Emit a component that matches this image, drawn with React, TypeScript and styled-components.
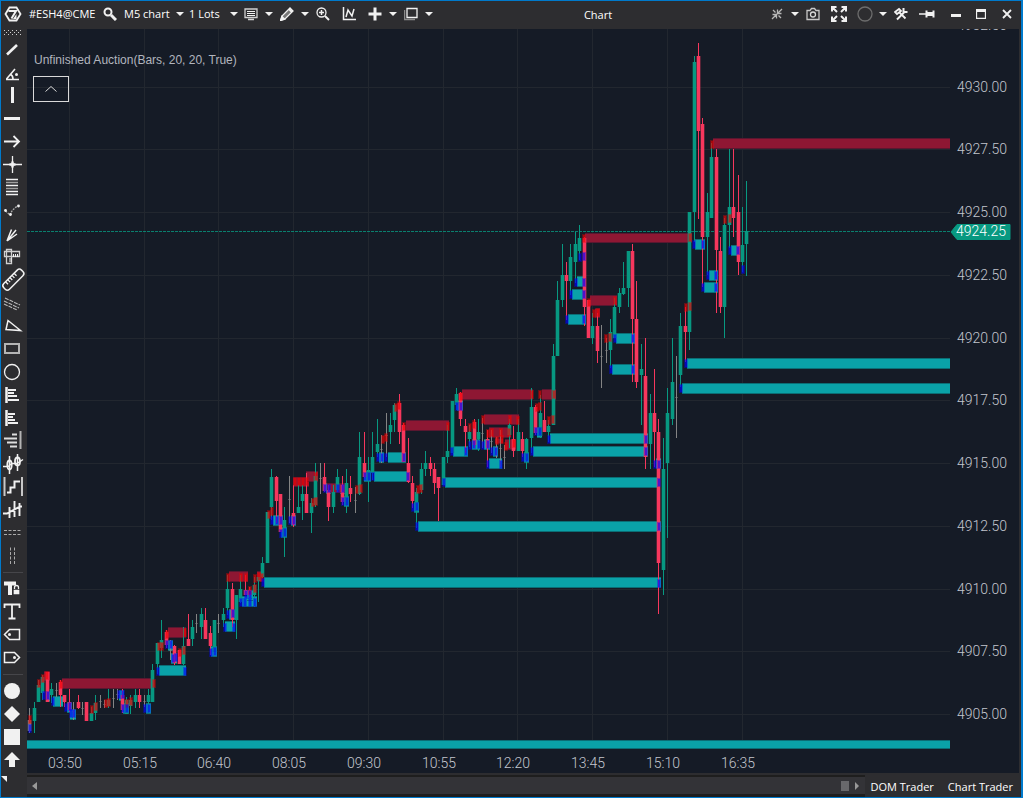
import React from "react";
import styled, { createGlobalStyle } from "styled-components";

const GlobalStyle = createGlobalStyle`
  * { box-sizing: border-box; }
  body { margin: 0; background: #2d2d30; }
  button, select { font: inherit; color: inherit; }
`;

const ui = `"Segoe UI", "Open Sans", "Noto Sans", sans-serif`;

const Window = styled.div`
  display: flex;
  flex-direction: column;
  min-height: 100vh;
  border: 1px solid #007acc;
  border-right-width: 2px;
  background: #2d2d30;
  color: #ffffff;
  font: 11px/16px ${ui};
`;

const TitleBar = styled.header`
  display: flex;
  align-items: center;
  height: 28px;
  padding-bottom: 2px;
`;

const Slot = styled.button<{ $w?: number }>`
  display: flex;
  flex: none;
  align-items: center;
  justify-content: center;
  width: ${(p) => p.$w ?? 20}px;
  height: 24px;
  padding: 0;
  border: 0;
  background: none;
`;

const Instrument = styled.span`
  width: 73px;
  padding-left: 4px;
  white-space: nowrap;
`;

const Picker = styled.label<{ $w: number }>`
  display: flex;
  flex: none;
  align-items: center;
  width: ${(p) => p.$w}px;
  select {
    flex: 1;
    min-width: 0;
    padding: 0 0 0 2px;
    border: 0;
    background: none;
    appearance: none;
    text-overflow: clip;
  }
  svg { margin-right: 3px; }
`;

const Title = styled.h1`
  flex: 1;
  margin: 0;
  padding: 2px 8px 0 0;
  font-size: 11px;
  font-weight: 400;
  text-align: center;
`;

const Body = styled.div`
  display: flex;
  flex: 1;
`;

const Tools = styled.nav`
  display: flex;
  flex: none;
  flex-direction: column;
  width: 26px;
`;

const Grip = styled.div`
  height: 9px;
  padding-left: 3px;
  line-height: 0;
`;

const Tool = styled.button`
  width: 22px;
  height: 23px;
  padding: 0;
  border: 0;
  background: none;
  svg { display: block; }
`;

const Separator = styled.hr`
  width: 20px;
  height: 1px;
  margin: 5px 0 4px 2px;
  border: 0;
  background: #46464a;
`;

const Main = styled.main`
  display: flex;
  flex: 1;
  flex-direction: column;
  min-width: 0;
`;

const ChartArea = styled.section`
  position: relative;
  display: flex;
  flex: 1;
  min-height: 744px;
  margin-right: 2px;
  background: #151b26;
`;

const Plot = styled.svg`
  flex: 1;
  min-width: 0;
  height: 744px;
`;

const PriceScale = styled.svg`
  flex: none;
  width: 69px;
  height: 744px;
`;

const Study = styled.div`
  position: absolute;
  top: 23px;
  left: 6px;
  color: #b2b5be;
  font: 12px/16px "Liberation Sans", Arial, sans-serif;
`;

const StudyName = styled.div`
  padding-left: 1px;
`;

const Collapse = styled.button`
  display: flex;
  align-items: center;
  justify-content: center;
  width: 36px;
  height: 26px;
  margin-top: 8px;
  padding: 0;
  border: 1px solid #d9d9d9;
  background: none;
`;

const Footer = styled.footer`
  display: flex;
  height: 24px;
`;

const ScrollBar = styled.div`
  display: flex;
  flex: 1;
  align-items: center;
  justify-content: space-between;
  margin-top: 2px;
  border: solid #1e1e1e;
  border-width: 2px 0 3px;
  background: #333337;
`;

const ScrollEnd = styled.div`
  display: flex;
  align-items: center;
`;

const Thumb = styled.div`
  width: 8px;
  height: 10px;
  margin-right: 2px;
  background: #68686b;
`;

const PanelButton = styled.button`
  margin: 0;
  padding: 4px 8px 0 6px;
  border: 0;
  background: none;
  line-height: 16px;
`;

/* ---------- chart data ---------- */

type Kind = "g" | "r" | "n";
// [kind, high, low, bodyTop, bodyBottom], one for each five minute bar
const bars: [Kind, number, number, number, number][] = [
  ["n", 708, 733, 720, 731], ["g", 702, 733, 708, 721], ["g", 680, 702, 685, 702], ["g", 675, 700, 677, 693],
  ["r", 672, 702, 672, 702], ["g", 683, 703, 689, 695], ["n", 683, 697, 0, 0], ["r", 680, 707, 682, 695],
  ["r", 695, 707, 695, 702], ["r", 689, 712, 702, 710], ["n", 702, 720, 0, 0], ["r", 695, 709, 702, 708],
  ["n", 702, 715, 0, 0], ["r", 702, 721, 702, 721], ["g", 707, 721, 713, 721], ["g", 695, 720, 703, 713],
  ["n", 695, 708, 0, 0], ["n", 700, 708, 0, 0], ["g", 689, 708, 700, 706], ["n", 689, 708, 0, 0],
  ["n", 689, 700, 0, 0], ["r", 689, 713, 695, 710], ["g", 697, 714, 700, 714], ["g", 695, 714, 700, 706],
  ["g", 689, 708, 695, 702], ["r", 689, 708, 695, 702], ["n", 695, 707, 0, 0], ["g", 689, 713, 695, 702],
  ["g", 664, 702, 670, 702], ["g", 643, 674, 643, 664], ["g", 620, 658, 640, 648], ["r", 630, 648, 632, 645],
  ["n", 640, 660, 0, 0], ["r", 645, 665, 646, 663], ["r", 650, 664, 650, 664], ["g", 627, 665, 646, 664],
  ["r", 614, 646, 639, 646], ["g", 620, 646, 627, 639], ["n", 614, 633, 0, 0], ["g", 608, 639, 614, 627],
  ["r", 608, 639, 620, 639], ["r", 626, 655, 633, 646], ["g", 620, 652, 620, 652], ["n", 614, 633, 0, 0],
  ["g", 608, 627, 614, 620], ["g", 575, 615, 589, 608], ["r", 583, 627, 589, 620], ["g", 595, 639, 595, 620],
  ["g", 575, 603, 589, 602], ["r", 575, 595, 590, 595], ["r", 587, 597, 590, 595], ["g", 577, 607, 585, 595],
  ["g", 577, 602, 577, 581], ["g", 557, 578, 563, 577], ["g", 512, 563, 512, 563], ["g", 469, 520, 477, 507],
  ["r", 476, 523, 477, 501], ["r", 494, 532, 494, 532], ["g", 507, 557, 520, 537], ["n", 476, 523, 0, 0],
  ["r", 485, 527, 513, 525], ["g", 485, 513, 507, 513], ["g", 485, 520, 494, 501], ["r", 473, 513, 494, 513],
  ["g", 498, 533, 503, 513], ["g", 463, 507, 476, 505], ["n", 463, 494, 0, 0], ["r", 463, 492, 477, 491],
  ["r", 485, 521, 490, 507], ["g", 485, 513, 492, 507], ["g", 469, 492, 477, 490], ["r", 476, 505, 485, 502],
  ["g", 469, 513, 483, 505], ["r", 476, 502, 488, 494], ["n", 487, 513, 0, 0], ["g", 432, 495, 457, 494],
  ["r", 432, 478, 463, 477], ["g", 457, 502, 470, 480], ["g", 432, 480, 457, 473], ["g", 419, 457, 444, 452],
  ["n", 435, 463, 0, 0], ["n", 413, 457, 0, 0], ["g", 413, 444, 425, 432], ["g", 403, 432, 405, 420],
  ["r", 394, 444, 403, 432], ["r", 423, 462, 425, 462], ["r", 438, 483, 463, 482], ["r", 476, 508, 483, 501],
  ["g", 488, 528, 492, 512], ["g", 463, 494, 469, 490], ["g", 451, 476, 463, 469], ["r", 457, 476, 463, 469],
  ["r", 463, 494, 469, 483], ["r", 477, 521, 477, 488], ["g", 457, 485, 457, 485], ["g", 425, 463, 451, 457],
  ["g", 401, 453, 401, 453], ["g", 388, 410, 394, 405], ["r", 392, 426, 393, 419], ["r", 419, 453, 426, 432],
  ["g", 425, 447, 432, 439], ["r", 419, 448, 422, 445], ["g", 419, 451, 432, 439], ["n", 418, 448, 0, 0],
  ["r", 430, 467, 439, 448], ["n", 430, 453, 0, 0], ["n", 437, 458, 0, 0], ["n", 430, 467, 0, 0],
  ["n", 445, 469, 0, 0], ["g", 419, 448, 425, 435], ["r", 426, 457, 439, 451], ["g", 419, 451, 432, 451],
  ["r", 432, 457, 439, 451], ["g", 438, 469, 439, 460], ["g", 388, 453, 407, 438], ["r", 405, 435, 407, 433],
  ["g", 395, 438, 413, 436], ["r", 401, 432, 420, 432], ["g", 420, 442, 426, 432], ["g", 344, 425, 356, 425],
  ["g", 281, 356, 300, 356], ["g", 244, 307, 275, 300], ["r", 262, 320, 275, 281], ["g", 244, 295, 257, 281],
  ["g", 232, 283, 244, 262], ["g", 225, 260, 238, 251], ["r", 237, 326, 238, 307], ["r", 300, 338, 300, 338],
  ["g", 313, 344, 326, 338], ["r", 313, 363, 326, 351], ["n", 325, 388, 0, 0], ["n", 338, 363, 0, 0],
  ["g", 319, 368, 332, 350], ["g", 298, 338, 307, 338], ["g", 288, 313, 293, 307], ["g", 262, 295, 288, 294],
  ["g", 251, 307, 251, 288], ["r", 244, 382, 251, 319], ["r", 281, 388, 319, 382], ["g", 344, 425, 369, 375],
  ["r", 338, 469, 376, 457], ["g", 394, 469, 413, 444], ["r", 369, 467, 413, 432], ["r", 419, 614, 432, 563],
  ["g", 438, 595, 469, 570], ["g", 388, 538, 413, 463], ["g", 338, 425, 382, 419], ["n", 356, 438, 0, 0],
  ["g", 313, 387, 326, 375], ["r", 307, 362, 326, 332], ["g", 212, 350, 212, 332], ["g", 56, 242, 62, 212],
  ["r", 43, 219, 56, 131], ["r", 118, 287, 124, 237], ["g", 193, 275, 212, 237], ["g", 143, 218, 157, 218],
  ["r", 149, 313, 157, 250], ["r", 237, 313, 251, 307], ["g", 218, 338, 225, 307], ["g", 149, 248, 207, 225],
  ["r", 149, 237, 207, 218], ["r", 175, 275, 212, 262], ["g", 207, 272, 245, 262], ["g", 181, 276, 231, 244],
];

// unfinished lows: [from, to, top]
const lowBands: [number, number, number][] = [
  [159, 186, 665], [53, 63, 696], [264, 661, 577], [225, 235, 621], [242, 257, 596], [273, 283, 515],
  [388, 406, 452], [374, 409, 471], [418, 661, 521], [445, 660, 477], [453, 468, 446], [489, 502, 458],
  [550, 648, 433], [533, 648, 446], [612, 635, 364], [616, 635, 333], [568, 586, 314], [572, 586, 289],
  [577, 586, 276], [695, 705, 239], [709, 718, 270], [704, 718, 282], [731, 740, 245], [46, 50, 691],
  [67, 72, 702], [70, 76, 709], [119, 124, 690], [123, 129, 703], [146, 151, 703], [168, 173, 640],
  [171, 177, 653], [211, 217, 646], [229, 235, 609], [247, 253, 590], [281, 287, 527], [291, 296, 515],
  [326, 331, 483], [340, 345, 483], [344, 349, 496], [364, 371, 471], [379, 384, 452], [414, 419, 502],
  [457, 463, 400], [472, 480, 439], [484, 490, 439], [493, 498, 446], [524, 529, 452], [537, 542, 427],
  [656, 661, 458],
];
const openLowBands: [number, number][] = [[0, 740], [687, 358], [682, 383]];

// unfinished highs: [from, to, top, height]
const highBands: [number, number, number, number][] = [
  [62, 154, 678, 11], [44, 50, 671, 10], [168, 186, 627, 11], [229, 248, 571, 11], [257, 262, 571, 11],
  [293, 309, 477, 10], [306, 318, 471, 11], [406, 449, 420, 11], [327, 345, 483, 10], [462, 533, 389, 11],
  [542, 556, 389, 11], [484, 519, 414, 11], [489, 511, 427, 11], [495, 503, 438, 6], [505, 516, 439, 11],
  [585, 692, 233, 10], [590, 617, 295, 11], [595, 600, 308, 10],
];

const highMarks: [number, number][] = [
  [28, 716], [37, 680], [41, 675], [45, 672], [59, 681], [152, 680], [90, 706], [94, 703], [104, 700], [107, 699],
  [125, 700], [129, 698], [157, 643], [160, 643], [165, 631], [183, 629], [178, 649], [182, 647], [226, 574],
  [239, 574], [244, 574], [248, 587], [253, 585], [253, 575], [257, 573], [260, 574], [267, 511], [270, 508],
  [293, 478], [297, 478], [301, 478], [305, 478], [314, 473], [311, 499], [314, 498], [355, 486], [359, 485],
  [381, 436], [384, 434], [394, 404], [397, 402], [402, 423], [446, 423], [416, 486], [419, 485], [459, 393],
  [530, 391], [538, 391], [552, 391], [468, 424], [472, 421], [481, 416], [508, 416], [516, 417], [486, 430],
  [490, 429], [499, 429], [507, 429], [495, 437], [500, 436], [504, 443], [512, 440], [535, 404], [538, 403],
  [547, 417], [551, 416], [582, 235], [688, 234], [587, 299], [613, 297], [592, 310], [596, 309], [604, 335],
  [608, 334], [684, 304], [688, 303], [710, 141], [723, 216], [728, 215],
];

const lowMarks: [number, number][] = [
  [28, 725], [42, 692], [46, 692], [51, 698], [64, 704], [68, 703], [69, 710], [72, 710], [117, 691], [121, 691],
  [121, 705], [125, 705], [143, 705], [147, 705], [156, 668], [183, 668], [165, 641], [169, 641], [171, 655],
  [174, 654], [209, 649], [213, 648], [226, 611], [231, 610], [223, 624], [232, 624], [239, 599], [243, 599],
  [248, 599], [253, 599], [244, 591], [248, 591], [261, 579], [270, 517], [275, 517], [279, 517], [279, 530],
  [283, 529], [288, 517], [292, 517], [323, 485], [327, 485], [336, 485], [341, 485], [341, 498], [345, 498],
  [363, 473], [367, 473], [371, 473], [376, 454], [380, 454], [384, 454], [402, 454], [406, 473], [411, 504],
  [415, 503], [415, 523], [442, 479], [450, 448], [464, 448], [455, 403], [459, 403], [468, 442], [472, 441],
  [477, 441], [481, 442], [486, 441], [490, 448], [494, 448], [486, 461], [499, 461], [521, 454], [525, 454],
  [530, 448], [534, 428], [538, 428], [547, 436], [644, 436], [644, 448], [653, 461], [657, 461], [657, 479],
  [657, 523], [657, 580], [565, 316], [582, 316], [569, 291], [582, 291], [574, 279], [582, 279], [578, 254],
  [582, 253], [613, 335], [631, 335], [609, 366], [631, 366], [692, 241], [701, 241], [706, 272], [714, 272],
  [701, 284], [714, 284], [728, 247], [736, 247], [741, 266], [684, 360], [679, 385],
];

const prices: [string, number][] = [
  ["4932.50", 25], ["4930.00", 87], ["4927.50", 149], ["4925.00", 212], ["4922.50", 275], ["4920.00", 338],
  ["4917.50", 400], ["4915.00", 463], ["4912.50", 526], ["4910.00", 589], ["4907.50", 651], ["4905.00", 714],
];
const times: [string, number][] = [
  ["03:50", 69], ["05:15", 144], ["06:40", 218], ["08:05", 293], ["09:30", 368], ["10:55", 443],
  ["12:20", 517], ["13:45", 592], ["15:10", 667], ["16:35", 742],
];

const tone: Record<Kind, string> = { g: "#089981", r: "#f7375d", n: "#848484" };
const axisFont = { fontFamily: "Roboto, sans-serif", fontSize: 14, fontWeight: 300, fill: "#c3c6ce" };

const Band = ({ x, y, w, h = 11, low }: { x: number; y: number; w: number | string; h?: number; low?: boolean }) => (
  <g>
    <rect x={x} y={y} width={w} height={h} fill={low ? "#0b6e75" : "#5a1730"} />
    <rect x={x} y={y + 1} width={w} height={h - 2} fill={low ? "#0aa2a8" : "#8e1733"} />
  </g>
);

const Marks = ({ at, fill }: { at: [number, number][]; fill: string }) => (
  <g fill={fill}>
    {at.map(([x, y], i) => (
      <g key={i}>
        <rect x={x} y={y - 1} width={4} height={9} opacity={0.35} />
        <rect x={x + 1} y={y} width={2} height={7} opacity={0.5} />
      </g>
    ))}
  </g>
);

const PricePlot = () => (
  <Plot role="img" aria-label="Five minute price chart">
    <svg x={-27} y={-29} width="100%" height="900" overflow="visible">
      {prices.map(([p, y]) => <rect key={p} x={27} y={y} width="100%" height={1} fill="#22272f" />)}
      {times.map(([t, x]) => <rect key={t} x={x} y={29} width={1} height={720} fill="#22272f" />)}
      <line x1={27} x2="110%" y1={231.5} y2={231.5} stroke="#089981" strokeDasharray="3 1" opacity={0.8} />
      {openLowBands.map(([x, y]) => <Band key={y} x={x} y={y} w="110%" h={y === 740 ? 9 : 11} low />)}
      <Band x={713} y={138} w="110%" />
      {lowBands.map(([a, b, y], i) => <Band key={i} x={a} y={y} w={b - a} low />)}
      {highBands.map(([a, b, y, h], i) => <Band key={i} x={a} y={y} w={b - a} h={h} />)}
      {bars.map(([k, hi, lo, top, bottom], i) => {
        const x = Math.floor(29.6 + 4.4 * i);
        return (
          <g key={i} fill={tone[k]}>
            <rect x={x} y={hi} width={1} height={lo - hi} />
            {top > 0 && <rect x={x - 1} y={top} width={3} height={bottom - top} />}
            {top > 0 && <rect x={x - 2} y={top} width={5} height={bottom - top} opacity={0.3} />}
            {top === 0 && <rect x={x - 1} y={(hi + lo) >> 1} width={3} height={1} opacity={0.5} />}
          </g>
        );
      })}
      <Marks at={highMarks} fill="#f00000" />
      <Marks at={lowMarks} fill="#0000ff" />
      {times.map(([t, x]) => (
        <text key={t} x={x - 4} y={768} textAnchor="middle" {...axisFont}>{t}</text>
      ))}
    </svg>
  </Plot>
);

const PriceAxis = () => (
  <PriceScale role="img" aria-label="Price scale">
    {prices.map(([p, y]) => <text key={p} x={7} y={y - 24} {...axisFont}>{p}</text>)}
    <path d="M1 203 L7 195.500 H60 V210.500 H7 Z" fill="#089981" stroke="#089981" strokeLinejoin="round" />
    <text x={6} y={207} {...axisFont} fill="#fff">4924.25</text>
  </PriceScale>
);

/* ---------- icons ---------- */

const Caret = () => <svg width="8" height="5"><path d="M0 0h8l-4 4z" fill="#f1f1f1" /></svg>;

const Icon = ({ size = 16, children }: { size?: number; children: React.ReactNode }) => (
  <svg width={size} height={size} viewBox={`0 0 ${size} ${size}`} fill="none" stroke="#f1f1f1" strokeWidth="1.3">
    {children}
  </svg>
);

const tools: Record<string, React.ReactNode> = {
  "Trend line": <path d="M6 16.5 16 7" strokeWidth="2.6" />,
  "Angle": <><path d="M5 18.500H18M5.500 18 14 8M9 13q3 1.500 3 5" strokeWidth="1.6" /><circle cx="15.500" cy="13.500" r="1.500" fill="#f1f1f1" stroke="none" /></>,
  "Vertical line": <path d="M11.500 3v16" strokeWidth="3" />,
  "Horizontal line": <path d="M3 11.500h16" strokeWidth="3" />,
  "Arrow": <path d="M3 11.500h15M12.500 6l5.500 5.500-5.500 5.500" strokeWidth="1.8" />,
  "Cross": <><path d="M2 11.500h19M11.500 3v17" strokeWidth="1.3" /><path d="M8.500 11.500h6M11.500 8.500v6" strokeWidth="2.4" /></>,
  "Levels": <><path d="M5 3.500h12M5 9.500h12M5 15.500h12M5 18.500h12" strokeWidth="1.5" /><path d="M5 6.500h12M5 12.500h12" stroke="#a0a0a0" strokeWidth="1.5" /></>,
  "Curve": <><path d="M4.500 12 9 16Q11 10 17 7" strokeDasharray="2 1" stroke="#aaa" /><g fill="#f1f1f1" stroke="none"><circle cx="4.500" cy="11.500" r="1.400" /><circle cx="9.500" cy="15.500" r="1.400" /><circle cx="17.500" cy="7" r="1.400" /></g></>,
  "Fan": <path d="M6 19 10.500 7.500M6 19 15 8M6 19l10-7" strokeWidth="1.5" />,
  "Measure": <><path d="M5.500 4.500h5v14h-5zM3.500 6.500h15v5h-15z" stroke="#d0d0d0" /><path d="M12.500 9v3M14.500 9v3M16.500 9v3M8 14h3M8 16h3" strokeWidth="1" /></>,
  "Ruler": <g transform="rotate(-45 12 12)"><rect x="0" y="8" width="25" height="8" rx="3" strokeWidth="1.5" /><path d="M5.500 8v3.500M8.500 8v3.500M11.500 8v3.500M14.500 8v3.500M17.500 8v3.500" /></g>,
  "Parallel lines": <path d="m3 13 13 6M3 10l15 7M4 7l15 7" stroke="#b8b8b8" strokeWidth="1.1" strokeDasharray="4 1" />,
  "Triangle": <path d="M5 15.500 7 6.500 19.500 16.500z" strokeWidth="1.5" />,
  "Rectangle": <path d="M4 7h14v9H4z" stroke="#b4b4b4" strokeWidth="2" />,
  "Ellipse": <circle cx="11" cy="12" r="7.500" />,
  "Volume profile": <><path d="M5.500 4v16" strokeWidth="2.500" /><path d="M7 7h8M7 10h6M7 13h9M7 17h11" strokeWidth="2" /></>,
  "Market profile": <><path d="M5.500 4v16" strokeWidth="2.500" /><path d="M7 8h7M7 11h5M7 14h7M7 17h10" strokeWidth="2" /></>,
  "Right profile": <><path d="M19.500 2v18" stroke="#b4b4b4" strokeWidth="2" /><path d="M11 5.500h5M3 9.500h13M6 13.500h10M9 17.500h7" stroke="#ddd" strokeWidth="2" /></>,
  "Candle pattern": <><path d="M2 14.500h5l4-3h5l6-4M8.500 4v18M16.500 2v17" strokeWidth="1.5" /><ellipse cx="8.500" cy="13" rx="2.200" ry="4.500" strokeWidth="1.8" /><ellipse cx="16.500" cy="9.500" rx="2.500" ry="4" strokeWidth="1.8" /></>,
  "Range": <><path d="M3.500 2v19M21 2v19" stroke="#c8c8c8" strokeWidth="2" /><path d="M6 17.500h3.500v-5h4v-6H19" strokeWidth="2" /></>,
  "Bar pattern": <path d="M2 15.500h4l13-7h2M8.500 9v11M13.500 3v16M18.500 5v13" strokeWidth="1.9" />,
  "Horizontal zone": <path d="M3 9.500h17M3 13.500h17" stroke="#aaa" strokeWidth="1" strokeDasharray="3 1.500" />,
  "Vertical zone": <path d="M9.500 3.500v17M13.500 3.500v17" stroke="#aaa" strokeWidth="1" strokeDasharray="3 1.500" />,
};

const textTools: Record<string, React.ReactNode> = {
  "Locked text": <><path d="M3 6.500h12M9 6v12" strokeWidth="4" /><path d="M12 12h7v6h-7z" fill="#f1f1f1" stroke="#2d2d30" /><path d="M13.500 12v-1.500a2 2 0 0 1 4 0V12" /></>,
  "Text": <path d="M3.500 8V4.500h15V8M11 4.500V18M7.500 18.500h7" strokeWidth="1.8" />,
  "Left label": <><path d="M8.500 6.500h10v10h-10l-5-5z" strokeWidth="1.5" /><circle cx="8.500" cy="11.500" r="1.500" fill="#f1f1f1" stroke="none" /></>,
  "Right label": <><path d="M3.500 6.500h10l5 5-5 5h-10z" strokeWidth="1.5" /><circle cx="13.500" cy="11.500" r="1.500" fill="#f1f1f1" stroke="none" /></>,
};

const shapeTools: Record<string, React.ReactNode> = {
  "Circle marker": <circle cx="11" cy="12" r="8" fill="#f1f1f1" stroke="none" />,
  "Diamond marker": <path d="M11 4l8 8-8 8-8-8z" fill="#f1f1f1" stroke="none" />,
  "Square marker": <path d="M3 4h16v16H3z" fill="#f1f1f1" stroke="none" />,
  "Arrow marker": <path d="M11 4l8 8h-5v7H8v-7H3z" fill="#f1f1f1" stroke="none" />,
};

const ToolGroup = ({ items }: { items: Record<string, React.ReactNode> }) => (
  <>
    {Object.entries(items).map(([name, art]) => (
      <Tool key={name} aria-label={name}>
        <svg width="22" height="23" viewBox="0 0 22 23" fill="none" stroke="#f1f1f1" strokeWidth="1.3" overflow="visible">{art}</svg>
      </Tool>
    ))}
  </>
);

export default function App() {
  return (
    <Window>
      <GlobalStyle />
      <TitleBar>
        <Slot $w={24} aria-label="Menu">
          <Icon size={18}>
            <path d="M5.500 2.500h7l4 6.500-4 6.500h-7L1.500 9z" strokeWidth="1.800" />
            <path d="M4.500 6H12L7.500 13.500" strokeWidth="2" />
            <path d="M12.500 9v5H9z" fill="#f1f1f1" stroke="none" />
          </Icon>
        </Slot>
        <Instrument>#ESH4@CME</Instrument>
        <Slot $w={24} aria-label="Find instrument">
          <Icon size={14}><circle cx="5" cy="5" r="3.500" strokeWidth="2" /><path d="m8 8 5 5" strokeWidth="3" /></Icon>
        </Slot>
        <Picker $w={65}><select aria-label="Time frame"><option>M5 chart</option></select><Caret /></Picker>
        <Picker $w={54}><select aria-label="Volume"><option>1 Lots</option></select><Caret /></Picker>
        <Slot aria-label="Templates">
          <Icon size={14}><path d="M1 2h12v8.500H1zM4 12.500h6" stroke="#d0d0d0" /><path d="M3 4.500h8M3 6.500h8M3 8.500h8" strokeWidth="1" /></Icon>
        </Slot>
        <Slot $w={16} aria-label="Template options"><Caret /></Slot>
        <Slot aria-label="Draw">
          <Icon size={14}><path d="m1 13 1-4 8-8 3 3-8 8z" fill="#777" /><path d="m1 13 1-3 2 2zM9 2l3 3" strokeWidth="2" /></Icon>
        </Slot>
        <Slot $w={16} aria-label="Drawing options"><Caret /></Slot>
        <Slot aria-label="Zoom in">
          <Icon size={14}><circle cx="5.500" cy="5.500" r="4.500" /><path d="M3 5.500h5M5.500 3v5" strokeWidth="1.500" /><path d="m9 9 4 4" strokeWidth="2" /></Icon>
        </Slot>
        <Slot $w={32} aria-label="Indicators">
          <Icon size={14}><path d="M1.500 0v12.500H14" strokeWidth="1.500" /><path d="m4 10 2-7 4 6 2-7" strokeWidth="1.500" /></Icon>
        </Slot>
        <Slot aria-label="Add"><Icon size={14}><path d="M7 .500v13M.500 7h13" strokeWidth="3" /></Icon></Slot>
        <Slot $w={16} aria-label="Add options"><Caret /></Slot>
        <Slot aria-label="Windows">
          <Icon size={14}><path d="M3 1.500h10v9H3z" /><path d="M.500 3v9.500H11" stroke="#8a8a8a" strokeWidth="1.500" /></Icon>
        </Slot>
        <Slot $w={16} aria-label="Window options"><Caret /></Slot>
        <Title>Chart</Title>
        <Slot aria-label="Compress">
          <Icon size={12}><path d="m1 11 10-10M2 2l2.500 2.500M7.500 7.500 10 10M6.500 1.500v4h4M1.500 6.500h4v4" stroke="#b8b8b8" /></Icon>
        </Slot>
        <Slot $w={16} aria-label="Compress options"><Caret /></Slot>
        <Slot aria-label="Screenshot">
          <Icon size={14}><path d="M1 3.500h3l1.500-2h3l1.500 2h3v9H1z" stroke="#c8c8c8" /><circle cx="7" cy="7.500" r="2.500" stroke="#d8d8d8" /></Icon>
        </Slot>
        <Slot $w={32} aria-label="Full screen">
          <Icon size={16}><path d="m1 1 5 5M15 1l-5 5M1 15l5-5M15 15l-5-5M1 5.500V1h4.500M10.500 1H15v4.500M1 10.500V15h4.500M10.500 15H15v-4.500" strokeWidth="2" /></Icon>
        </Slot>
        <Slot aria-label="Link group"><Icon size={16}><circle cx="8" cy="8" r="7" stroke="#6d6d6d" /></Icon></Slot>
        <Slot $w={16} aria-label="Link options"><Caret /></Slot>
        <Slot aria-label="Settings">
          <Icon size={14}><path d="m1 5 4-3 2 2-4 3zM5.500 5.500l6 6" strokeWidth="1.800" /><path d="M3 12.500 10 5.500M9.500 1v4h4" strokeWidth="2" /></Icon>
        </Slot>
        <Slot $w={32} aria-label="Pin">
          <Icon size={16}><path d="M0 8h7" strokeWidth="1.500" /><path d="M7.500 4.500v7M14.500 4.500v7" strokeWidth="2" /><path d="M8 8h6" strokeWidth="4" /></Icon>
        </Slot>
        <Slot $w={26} aria-label="Minimize"><Icon size={10}><path d="M0 6.500h10" strokeWidth="3" /></Icon></Slot>
        <Slot $w={24} aria-label="Maximize"><Icon size={10}><path d="M.500 1v8.500h9V1" /><path d="M0 1.500h10" strokeWidth="3" /></Icon></Slot>
        <Slot $w={28} aria-label="Close"><Icon size={10}><path d="m1 1 8 8M9 1 1 9" strokeWidth="1.800" /></Icon></Slot>
      </TitleBar>
      <Body>
        <Tools aria-label="Drawing tools">
          <Grip>
            <svg width="18" height="6" stroke="#d0d0d0">
              <path d="M0 1.500h18M0 5.500h18" strokeDasharray="1 3" />
              <path d="M2 3.500h16" strokeDasharray="1 3" />
            </svg>
          </Grip>
          <ToolGroup items={tools} />
          <Separator />
          <ToolGroup items={textTools} />
          <Separator />
          <ToolGroup items={shapeTools} />
          <svg width="8" height="12"><path d="M0 5h6v6z" fill="#f1f1f1" /></svg>
        </Tools>
        <Main>
          <ChartArea>
            <PricePlot />
            <PriceAxis />
            <Study>
              <StudyName>Unfinished Auction(Bars, 20, 20, True)</StudyName>
              <Collapse aria-label="Collapse indicators">
                <svg width="12" height="6" fill="none" stroke="#d9d9d9"><path d="m.500 5.500 5.500-5 5.500 5" /></svg>
              </Collapse>
            </Study>
          </ChartArea>
          <Footer>
            <ScrollBar>
              <Slot $w={14} aria-label="Scroll left"><svg width="5" height="8"><path d="M5 0v8L0 4z" fill="#999" /></svg></Slot>
              <ScrollEnd>
                <Thumb />
                <Slot $w={14} aria-label="Scroll right"><svg width="5" height="8"><path d="M0 0v8l4-4z" fill="#999" /></svg></Slot>
              </ScrollEnd>
            </ScrollBar>
            <PanelButton>DOM Trader</PanelButton>
            <PanelButton>Chart Trader</PanelButton>
          </Footer>
        </Main>
      </Body>
    </Window>
  );
}
